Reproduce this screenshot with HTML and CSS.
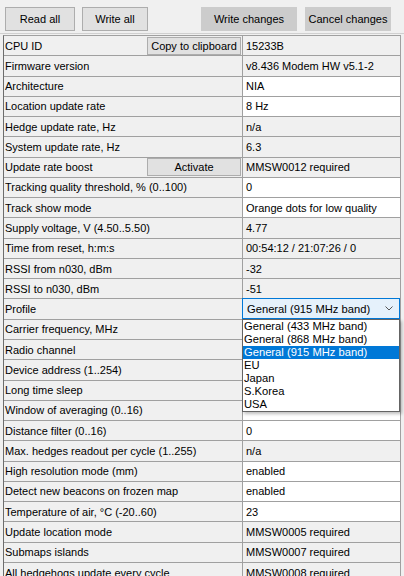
FILE: index.html
```html
<!DOCTYPE html>
<html lang="en">
<head>
  <meta charset="UTF-8">
  <meta name="viewport" content="width=device-width, initial-scale=1.0">
  <title>Device settings</title>
  <link rel="stylesheet" href="styles.css">
</head>
<body>
  <div class="toolbar">
    <button class="btn btn-read">Read all</button>
    <button class="btn btn-write">Write all</button>
    <button class="btn btn-dark btn-changes">Write changes</button>
    <button class="btn btn-dark btn-cancel">Cancel changes</button>
  </div>

  <div class="grid">
    <div class="row">
      <div class="label">CPU ID <button class="cell-btn">Copy to clipboard</button></div>
      <div class="value ro">15233B</div>
    </div>
    <div class="row">
      <div class="label">Firmware version</div>
      <div class="value ro">v8.436 Modem HW v5.1-2</div>
    </div>
    <div class="row">
      <div class="label">Architecture</div>
      <div class="value">NIA</div>
    </div>
    <div class="row">
      <div class="label">Location update rate</div>
      <div class="value">8 Hz</div>
    </div>
    <div class="row">
      <div class="label">Hedge update rate, Hz</div>
      <div class="value ro">n/a</div>
    </div>
    <div class="row">
      <div class="label">System update rate, Hz</div>
      <div class="value ro">6.3</div>
    </div>
    <div class="row">
      <div class="label">Update rate boost <button class="cell-btn">Activate</button></div>
      <div class="value ro">MMSW0012 required</div>
    </div>
    <div class="row">
      <div class="label">Tracking quality threshold, % (0..100)</div>
      <div class="value">0</div>
    </div>
    <div class="row">
      <div class="label">Track show mode</div>
      <div class="value">Orange dots for low quality</div>
    </div>
    <div class="row">
      <div class="label">Supply voltage, V (4.50..5.50)</div>
      <div class="value ro">4.77</div>
    </div>
    <div class="row">
      <div class="label">Time from reset, h:m:s</div>
      <div class="value ro">00:54:12 / 21:07:26 / 0</div>
    </div>
    <div class="row">
      <div class="label">RSSI from n030, dBm</div>
      <div class="value ro">-32</div>
    </div>
    <div class="row">
      <div class="label">RSSI to n030, dBm</div>
      <div class="value ro">-51</div>
    </div>
    <div class="row">
      <div class="label">Profile</div>
      <div class="value combo-cell">
        <div class="combo">
          <span>General (915 MHz band)</span>
          <svg class="chevron" width="8" height="5" viewBox="0 0 8 5"><path d="M0.5 0.5 L4 4 L7.5 0.5" fill="none" stroke="#555" stroke-width="1"/></svg>
        </div>
        <ul class="dropdown">
          <li>General (433 MHz band)</li>
          <li>General (868 MHz band)</li>
          <li class="selected">General (915 MHz band)</li>
          <li>EU</li>
          <li>Japan</li>
          <li>S.Korea</li>
          <li>USA</li>
        </ul>
      </div>
    </div>
    <div class="row">
      <div class="label">Carrier frequency, MHz</div>
      <div class="value"></div>
    </div>
    <div class="row">
      <div class="label">Radio channel</div>
      <div class="value"></div>
    </div>
    <div class="row">
      <div class="label">Device address (1..254)</div>
      <div class="value"></div>
    </div>
    <div class="row">
      <div class="label">Long time sleep</div>
      <div class="value"></div>
    </div>
    <div class="row">
      <div class="label">Window of averaging (0..16)</div>
      <div class="value"></div>
    </div>
    <div class="row">
      <div class="label">Distance filter (0..16)</div>
      <div class="value">0</div>
    </div>
    <div class="row">
      <div class="label">Max. hedges readout per cycle (1..255)</div>
      <div class="value ro">n/a</div>
    </div>
    <div class="row">
      <div class="label">High resolution mode (mm)</div>
      <div class="value">enabled</div>
    </div>
    <div class="row">
      <div class="label">Detect new beacons on frozen map</div>
      <div class="value">enabled</div>
    </div>
    <div class="row">
      <div class="label">Temperature of air, &deg;C (-20..60)</div>
      <div class="value">23</div>
    </div>
    <div class="row">
      <div class="label">Update location mode</div>
      <div class="value ro">MMSW0005 required</div>
    </div>
    <div class="row">
      <div class="label">Submaps islands</div>
      <div class="value ro">MMSW0007 required</div>
    </div>
    <div class="row">
      <div class="label">All hedgehogs update every cycle</div>
      <div class="value ro">MMSW0008 required</div>
    </div>
  </div>
</body>
</html>
```

FILE: styles.css
```css
body {
  margin: 0;
  background-color: #f0f0f0;
  color: #000;
  font-family: "Liberation Sans", Arial, sans-serif;
  font-size: 11px;
  overflow: hidden;
}
.toolbar {
  display: flex;
  height: 34px;
  box-sizing: border-box;
  padding: 7px 0 0 5px;
  border-bottom: 1px solid #d0d0d0;
}
.btn {
  height: 24px;
  font-family: inherit;
  font-size: 11px;
  background: #e1e1e1;
  border: 1px solid #adadad;
  padding: 0;
  color: #000;
}
.btn-read { width: 70px; }
.btn-write { width: 66px; margin-left: 7px; }
.btn-dark {
  background: #cccccc;
  border-color: #cccccc;
}
.btn-changes { width: 96px; margin-left: 53px; }
.btn-cancel { width: 86px; margin-left: 8px; }

.grid {
  margin: 1px 0 0 3px;
  width: 397px;
  border-left: 1px solid #6d6d6d;
  border-top: 1px solid #a0a0a0;
}
.row {
  display: grid;
  grid-template-columns: 239px 1fr;
  height: 20.27px;
  box-sizing: border-box;
  border-bottom: 1px solid #a0a0a0;
}
.label, .value {
  display: flex;
  align-items: center;
  white-space: nowrap;
  overflow: hidden;
}
.label {
  padding-left: 1px;
  justify-content: space-between;
  border-right: 1px solid #a0a0a0;
}
.value {
  padding-left: 3px;
  background: #fff;
  border-right: 1px solid #a0a0a0;
}
.value.ro {
  background: #f0f0f0;
}
.cell-btn {
  width: 94px;
  height: 18px;
  margin-right: 1px;
  padding: 0;
  font-family: inherit;
  font-size: 11px;
  background: #e1e1e1;
  border: 1px solid #adadad;
  color: #000;
}

.combo-cell {
  position: relative;
  overflow: visible;
  padding: 0;
  background: #f0f0f0;
}
.combo {
  flex: 1;
  align-self: stretch;
  display: flex;
  align-items: center;
  justify-content: space-between;
  margin: -1px 0 0 -1px;
  padding: 0 6px 0 4px;
  background: #e5f1fb;
  border: 1px solid #0078d7;
  font-size: 11.2px;
}
.dropdown {
  position: absolute;
  top: 20px;
  left: -1px;
  width: 156px;
  margin: 0;
  padding: 0;
  list-style: none;
  background: #fff;
  border: 1px solid #646464;
  box-shadow: 2px 2px 3px rgba(0, 0, 0, 0.25);
  font-size: 11.2px;
  z-index: 2;
}
.dropdown li {
  height: 13px;
  line-height: 13px;
  padding-left: 1px;
}
.dropdown li.selected {
  background: #0078d7;
  color: #fff;
}
```
